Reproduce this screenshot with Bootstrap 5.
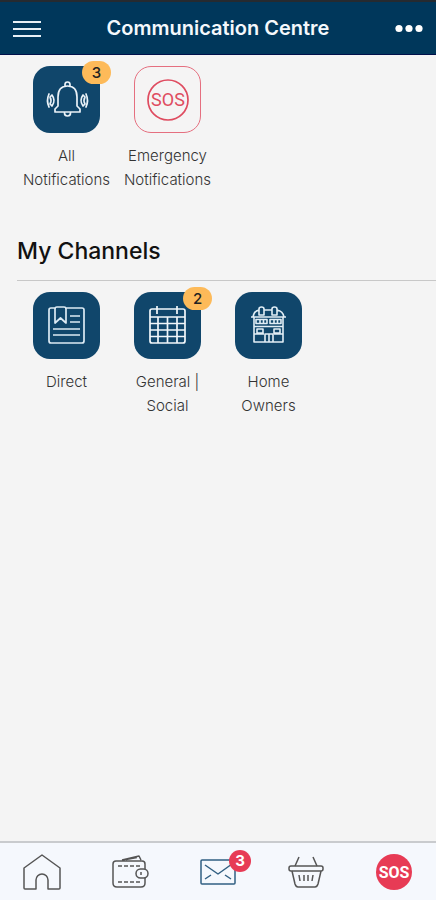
<!DOCTYPE html>
<html lang="en">
<head>
<meta charset="utf-8">
<meta name="viewport" content="width=device-width, initial-scale=1">
<title>Communication Centre</title>
<link href="https://cdn.jsdelivr.net/npm/bootstrap@5.3.0/dist/css/bootstrap.min.css" rel="stylesheet">
<style>
body { background: #f4f4f4; font-family: Inter, "Open Sans", sans-serif; color: #444; }
.topbar { background: #00375b; border-top: 2px solid #252a30; border-bottom: 1px solid #00104a; height: 55px; }
.topbar h1 { font-size: 20px; line-height: 28px; font-weight: 600; color: #f4f8fc; }
.topbar svg { display: block; margin-top: 2px; }
.channels { padding-left: 16px; padding-top: 11px; }
.channel { width: 101px; font-size: 15px; line-height: 24px; font-weight: 300; color: #333; }
.tile { width: 67px; height: 67px; border-radius: 17px; background: #10466b; margin-bottom: 11px; }
.tile-sos { background: #f5f4f4; border: 1px solid #e56f7f; }
.tile svg { display: block; }
.count { top: -5px; right: -11px; width: 29px; height: 23px; border-radius: 12px; background: #fdba59; color: #222; font-size: 15px; line-height: 23px; font-weight: 500; }
.heading { font-size: 23px; line-height: 32px; font-weight: 500; color: #111; }
.section-head { margin-left: 17px; padding-top: 43px; padding-bottom: 13px; border-bottom: 1px solid #c8c8c8; }
.tabbar { background: #f5f8fd; border-top: 2px solid #c9cbce; height: 59px; }
.tabbar a { width: 44px; height: 44px; }
.tabbar svg { display: block; }
.mail-count { top: 0; right: -11px; width: 22px; height: 22px; background: #e73b55; color: #fff; font-size: 15px; line-height: 22px; font-weight: 700; }
.sos-line { font-family: Roboto, sans-serif; font-size: 18px; font-weight: 400; }
.sos-solid { font-family: Roboto, sans-serif; font-size: 16px; font-weight: 700; }
</style>
</head>
<body>
<div class="d-flex flex-column min-vh-100">
<header class="topbar d-flex align-items-center justify-content-between px-2">
  <button type="button" class="btn p-1 border-0" aria-label="Menu">
    <svg width="30" height="20" fill="none" stroke="#e8f0f6" stroke-width="2"><path d="M1 3h28M1 10h28M1 17h28"/></svg>
  </button>
  <h1 class="m-0">Communication Centre</h1>
  <button type="button" class="btn p-1 border-0" aria-label="More">
    <svg width="30" height="20" fill="#fff"><circle cx="5" cy="9.500" r="3.6"/><circle cx="15" cy="9.500" r="3.6"/><circle cx="25" cy="9.500" r="3.6"/></svg>
  </button>
</header>
<main class="flex-grow-1">
  <nav class="channels d-flex flex-wrap" aria-label="Notifications">
    <a href="#" class="channel d-flex flex-column align-items-center text-center text-decoration-none">
      <span class="tile position-relative d-block">
        <svg width="67" height="67" fill="none" stroke="#eaf2f8" stroke-width="1.7" stroke-linecap="round" stroke-linejoin="round"><path d="M22 46h25v-3l-3-3v-9c0-7-3-11-9.500-11S25 24 25 31v9l-3 3zM32 20v-1.500a2.500 2.500 0 1 1 5 0V20M31.500 47a3 3 0 0 0 6 0M19 29q4 5.500 0 11l-2-2q2-3.500 0-7zM16 28q-3 6.500 0 13M50 29q-4 5.500 0 11l2-2q-2-3.500 0-7zM53 28q3 6.500 0 13"/></svg>
        <span class="count position-absolute text-center">3</span>
      </span>
      <span>All<br>Notifications</span>
    </a>
    <a href="#" class="channel d-flex flex-column align-items-center text-center text-decoration-none">
      <span class="tile tile-sos position-relative d-block">
        <svg width="65" height="65" viewBox="1 1 65 65"><circle cx="34" cy="34" r="20" fill="none" stroke="#df4c60" stroke-width="1.7"/><text x="34" y="40" text-anchor="middle" fill="#df4c60" class="sos-line">SOS</text></svg>
      </span>
      <span>Emergency<br>Notifications</span>
    </a>
  </nav>
  <div class="section-head"><h2 class="heading m-0">My Channels</h2></div>
  <nav class="channels d-flex flex-wrap" aria-label="My Channels">
    <a href="#" class="channel d-flex flex-column align-items-center text-center text-decoration-none">
      <span class="tile position-relative d-block">
        <svg width="67" height="67" fill="none" stroke="#dceaf4" stroke-width="1.7" stroke-linejoin="round"><path d="M22 16h-4a2 2 0 0 0-2 2v31a2 2 0 0 0 2 2h31a2 2 0 0 0 2-2V18a2 2 0 0 0-2-2H33M22 31V17q0-2 2-2h7q2 0 2 2v14l-5.500-5zM37 24h10M37 30h10M20 37h27M20 43h27"/></svg>
      </span>
      <span>Direct</span>
    </a>
    <a href="#" class="channel d-flex flex-column align-items-center text-center text-decoration-none">
      <span class="tile position-relative d-block">
        <svg width="67" height="67" fill="none" stroke="#f1f7fb" stroke-width="1.7"><rect x="16" y="17" width="35" height="34" rx="2"/><path d="M16 25h35M16 31.500h35M16 38h35M16 44.500h35M24 25v26M33.500 25v26M43 25v26M23 14v8M43 14v8"/></svg>
        <span class="count position-absolute text-center">2</span>
      </span>
      <span>General |<br>Social</span>
    </a>
    <a href="#" class="channel d-flex flex-column align-items-center text-center text-decoration-none">
      <span class="tile position-relative d-block">
        <svg width="67" height="67" fill="none" stroke="#e2eef6" stroke-width="1.6" stroke-linejoin="round"><path d="M16 25h35M18 25q1-6 6-7M29 18h8M42 18q6 1 7 7M24 23v-6q0-2 2.500-2t2.500 2v6zM37 23v-6q0-2 2.500-2t2.500 2v6zM19 25v25h29V25M19 34.500h29M30 50v-8h8v8M34 42v8M21 27.500h11v4H21zM35 27.500h11v4H35zM25 27.500v4M28.500 27.500v4M39 27.500v4M42.500 27.500v4M22 37h6v4h-6zM39 37h6v4h-6zM19 42h10M39 42h9"/></svg>
      </span>
      <span>Home<br>Owners</span>
    </a>
  </nav>
</main>
<footer>
  <nav class="tabbar d-flex align-items-center justify-content-between px-3" aria-label="Main">
    <a href="#" class="ms-1" aria-label="Home"><svg width="44" height="44" fill="none" stroke="#555" stroke-width="1.5" stroke-linejoin="round"><path d="M4 18L22 5l18 13v20q0 1-1 1H28V30a6 6 0 0 0-12 0v9H5q-1 0-1-1z"/></svg></a>
    <a href="#" aria-label="Wallet"><svg width="44" height="44" fill="none" stroke="#555" stroke-width="1.5" stroke-linejoin="round"><path d="M37 19v-5q0-3-3-3H8q-3 0-3 3v19q0 4 4 4h24q4 0 4-4v-5M14 10l17-4 2 4M18 9.500l11-2"/><path d="M10 16h23M10 32h23" stroke-dasharray="4 2"/><rect x="28" y="19" width="12" height="9" rx="4.500"/><path d="M33 22v3"/></svg></a>
    <a href="#" class="position-relative" aria-label="Messages, 3 unread"><svg width="44" height="44" fill="none" stroke="#315f82" stroke-width="1.5" stroke-linejoin="round"><rect x="5" y="10" width="34" height="24" rx="1"/><path d="M9 15l13 9 14-10M9 29l6-4M29 25l6 4"/></svg><span class="mail-count position-absolute rounded-circle text-center">3</span></a>
    <a href="#" aria-label="Basket"><svg width="44" height="44" fill="none" stroke="#555" stroke-width="1.5" stroke-linejoin="round"><rect x="5" y="16" width="34" height="5" rx="2"/><path d="M8 21l3 13q1 3 3 3h17q2 0 3-3l3-13M15 7l-4 9M29 7l4 9M15 25l1 6M20 25v6M24 25v6M29 25l-1 6"/></svg></a>
    <a href="#" class="me-1" aria-label="Emergency SOS"><svg width="44" height="44"><circle cx="22" cy="22" r="18" fill="#e73b55"/><text x="22" y="28" text-anchor="middle" fill="#fff" class="sos-solid">SOS</text></svg></a>
  </nav>
</footer>
</div>
<script src="https://cdn.jsdelivr.net/npm/bootstrap@5.3.0/dist/js/bootstrap.bundle.min.js"></script>
</body>
</html>
